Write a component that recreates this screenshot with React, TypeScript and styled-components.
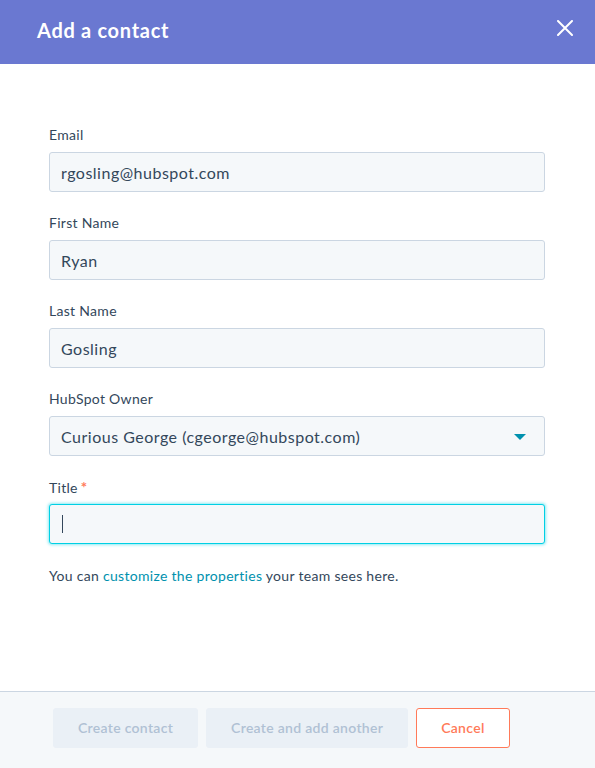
import React from 'react';
import styled, { createGlobalStyle } from 'styled-components';

const GlobalStyle = createGlobalStyle`
  html, body {
    margin: 0;
    padding: 0;
    background: #ffffff;
  }
  body {
    font-family: Lato, 'Liberation Sans', sans-serif;
    color: #33475b;
    -webkit-font-smoothing: antialiased;
  }
`;

const Modal = styled.div`
  min-height: 100vh;
  display: flex;
  flex-direction: column;
  background: #ffffff;
`;

const Header = styled.header`
  height: 64px;
  flex-shrink: 0;
  background: #6a78d1;
  display: flex;
  align-items: center;
  justify-content: space-between;
  padding: 0 22px 0 37px;
  box-sizing: border-box;
`;

const Title = styled.h1`
  margin: 0 0 4px;
  font-size: 20px;
  font-weight: 700;
  color: #ffffff;
  letter-spacing: 0.7px;
`;

const CloseButton = styled.button`
  width: 16px;
  height: 16px;
  padding: 0;
  margin-bottom: 8px;
  border: none;
  background: none;
  display: flex;
  cursor: pointer;
`;

const Body = styled.main`
  flex: 1;
  padding: 64px 50px 0 49px;
`;

const Field = styled.div`
  margin-bottom: 24px;
`;

const Label = styled.div`
  height: 14px;
  margin-bottom: 10px;
  font-size: 14px;
  line-height: 14px;
  letter-spacing: 0.3px;
  color: #33475b;
`;

const Required = styled.span`
  color: #ff7a59;
  font-weight: 700;
  font-size: 15px;
  margin-left: 3px;
`;

const Input = styled.div<{ $focused?: boolean }>`
  height: 40px;
  box-sizing: border-box;
  display: flex;
  align-items: center;
  padding: 0 18px 0 11px;
  background: #f5f8fa;
  border: 1px solid ${p => (p.$focused ? '#00d0e4' : '#cbd6e2')};
  border-radius: 3px;
  box-shadow: ${p => (p.$focused ? '0 0 3px 1px rgba(0, 208, 228, 0.45)' : 'none')};
  font-size: 16px;
  letter-spacing: 0.5px;
  color: #33475b;
`;

const Value = styled.span`
  flex: 1;
`;

const Caret = styled.span`
  width: 1px;
  height: 18px;
  margin-left: 1px;
  background: #33475b;
`;

const Arrow = styled.span`
  width: 0;
  height: 0;
  border-left: 6px solid transparent;
  border-right: 6px solid transparent;
  border-top: 6px solid #0091ae;
  margin-top: 2px;
`;

const Help = styled.p`
  margin: -4px 0 0;
  font-size: 14px;
  line-height: 24px;
  letter-spacing: 0.3px;
  color: #33475b;
`;

const Link = styled.a`
  color: #0091ae;
  text-decoration: none;
`;

const Footer = styled.footer`
  flex-shrink: 0;
  display: flex;
  gap: 8px;
  padding: 16px 53px 20px;
  background: #f5f8fa;
  border-top: 1px solid #cbd6e2;
`;

const Button = styled.button<{ $variant?: 'disabled' | 'secondary' }>`
  height: 40px;
  padding: 0 24px 2px;
  box-sizing: border-box;
  border-radius: 3px;
  font-family: inherit;
  font-size: 14px;
  font-weight: 600;
  letter-spacing: 0.3px;
  border: 1px solid ${p => (p.$variant === 'secondary' ? '#ff7a59' : '#eaf0f6')};
  background: ${p => (p.$variant === 'secondary' ? '#ffffff' : '#eaf0f6')};
  color: ${p => (p.$variant === 'secondary' ? '#ff7a59' : '#b0c1d4')};
  cursor: ${p => (p.$variant === 'disabled' ? 'default' : 'pointer')};
`;

const fields = [
  { label: 'Email', value: 'rgosling@hubspot.com' },
  { label: 'First Name', value: 'Ryan' },
  { label: 'Last Name', value: 'Gosling' },
];

const App = () => {
  return (
    <>
      <GlobalStyle />
      <Modal>
        <Header>
          <Title>Add a contact</Title>
          <CloseButton aria-label="Close">
            <svg width="16" height="16" viewBox="0 0 16 16">
              <path d="M1 1L15 15M15 1L1 15" stroke="#ffffff" strokeWidth="2" strokeLinecap="round" />
            </svg>
          </CloseButton>
        </Header>

        <Body>
          {fields.map(f => (
            <Field key={f.label}>
              <Label>{f.label}</Label>
              <Input>
                <Value>{f.value}</Value>
              </Input>
            </Field>
          ))}

          <Field>
            <Label>HubSpot Owner</Label>
            <Input>
              <Value>Curious George (cgeorge@hubspot.com)</Value>
              <Arrow />
            </Input>
          </Field>

          <Field>
            <Label>
              Title<Required>*</Required>
            </Label>
            <Input $focused>
              <Caret />
            </Input>
          </Field>

          <Help>
            You can <Link href="#">customize the properties</Link> your team sees here.
          </Help>
        </Body>

        <Footer>
          <Button $variant="disabled">Create contact</Button>
          <Button $variant="disabled">Create and add another</Button>
          <Button $variant="secondary">Cancel</Button>
        </Footer>
      </Modal>
    </>
  );
};

export default App;
